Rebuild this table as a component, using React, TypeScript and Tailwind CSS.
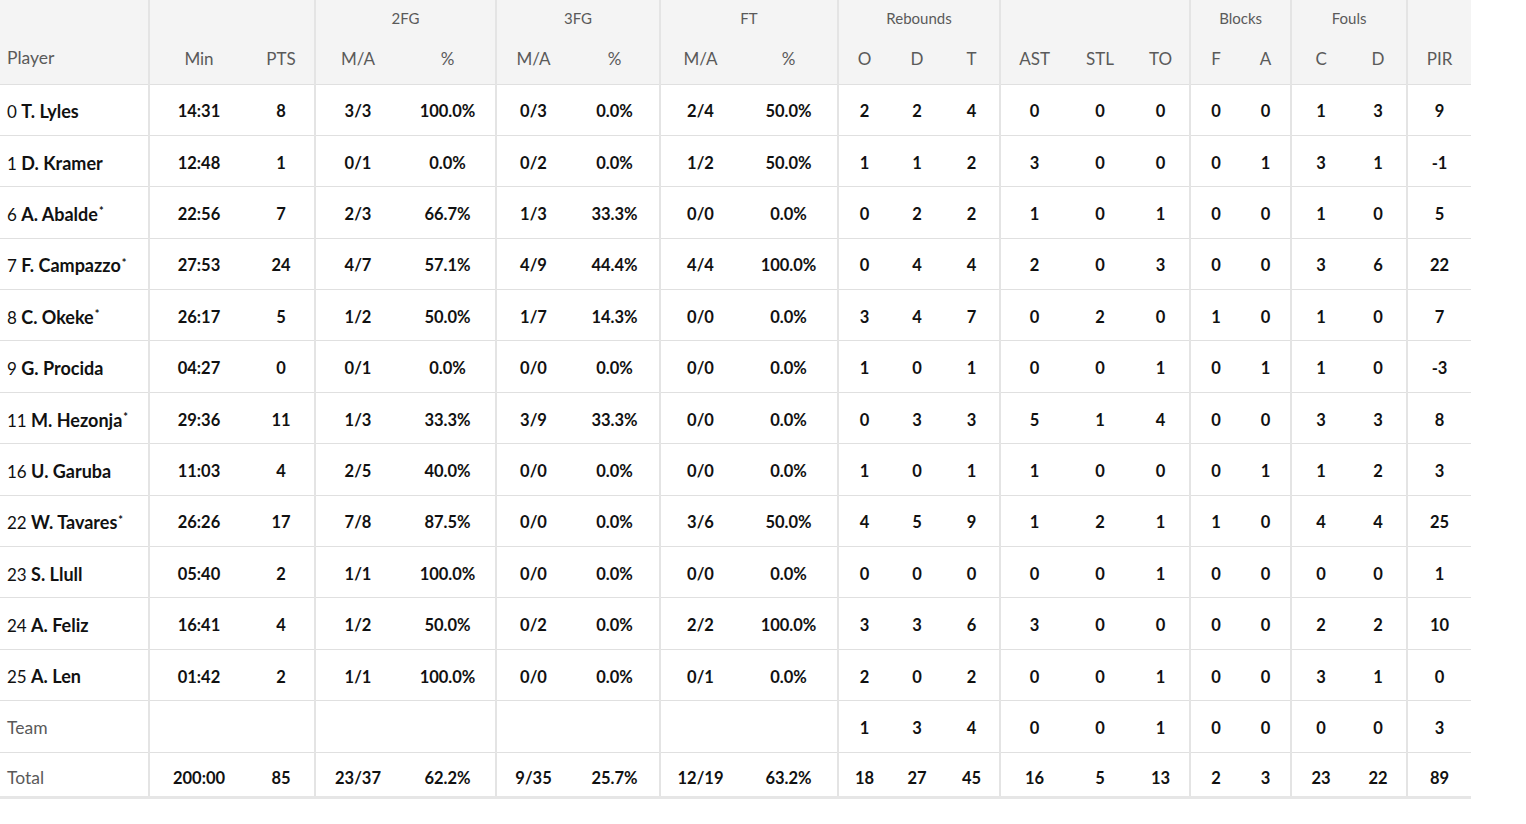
import React from "react";

type Row = {
  no?: string;
  name: string;
  starter?: boolean;
  stats: string[];
};

const rows: Row[] = [
  { no: "0", name: "T. Lyles", stats: ["14:31", "8", "3/3", "100.0%", "0/3", "0.0%", "2/4", "50.0%", "2", "2", "4", "0", "0", "0", "0", "0", "1", "3", "9"] },
  { no: "1", name: "D. Kramer", stats: ["12:48", "1", "0/1", "0.0%", "0/2", "0.0%", "1/2", "50.0%", "1", "1", "2", "3", "0", "0", "0", "1", "3", "1", "-1"] },
  { no: "6", name: "A. Abalde", starter: true, stats: ["22:56", "7", "2/3", "66.7%", "1/3", "33.3%", "0/0", "0.0%", "0", "2", "2", "1", "0", "1", "0", "0", "1", "0", "5"] },
  { no: "7", name: "F. Campazzo", starter: true, stats: ["27:53", "24", "4/7", "57.1%", "4/9", "44.4%", "4/4", "100.0%", "0", "4", "4", "2", "0", "3", "0", "0", "3", "6", "22"] },
  { no: "8", name: "C. Okeke", starter: true, stats: ["26:17", "5", "1/2", "50.0%", "1/7", "14.3%", "0/0", "0.0%", "3", "4", "7", "0", "2", "0", "1", "0", "1", "0", "7"] },
  { no: "9", name: "G. Procida", stats: ["04:27", "0", "0/1", "0.0%", "0/0", "0.0%", "0/0", "0.0%", "1", "0", "1", "0", "0", "1", "0", "1", "1", "0", "-3"] },
  { no: "11", name: "M. Hezonja", starter: true, stats: ["29:36", "11", "1/3", "33.3%", "3/9", "33.3%", "0/0", "0.0%", "0", "3", "3", "5", "1", "4", "0", "0", "3", "3", "8"] },
  { no: "16", name: "U. Garuba", stats: ["11:03", "4", "2/5", "40.0%", "0/0", "0.0%", "0/0", "0.0%", "1", "0", "1", "1", "0", "0", "0", "1", "1", "2", "3"] },
  { no: "22", name: "W. Tavares", starter: true, stats: ["26:26", "17", "7/8", "87.5%", "0/0", "0.0%", "3/6", "50.0%", "4", "5", "9", "1", "2", "1", "1", "0", "4", "4", "25"] },
  { no: "23", name: "S. Llull", stats: ["05:40", "2", "1/1", "100.0%", "0/0", "0.0%", "0/0", "0.0%", "0", "0", "0", "0", "0", "1", "0", "0", "0", "0", "1"] },
  { no: "24", name: "A. Feliz", stats: ["16:41", "4", "1/2", "50.0%", "0/2", "0.0%", "2/2", "100.0%", "3", "3", "6", "3", "0", "0", "0", "0", "2", "2", "10"] },
  { no: "25", name: "A. Len", stats: ["01:42", "2", "1/1", "100.0%", "0/0", "0.0%", "0/1", "0.0%", "2", "0", "2", "0", "0", "1", "0", "0", "3", "1", "0"] },
  { name: "Team", stats: ["", "", "", "", "", "", "", "", "1", "3", "4", "0", "0", "1", "0", "0", "0", "0", "3"] },
  { name: "Total", stats: ["200:00", "85", "23/37", "62.2%", "9/35", "25.7%", "12/19", "63.2%", "18", "27", "45", "16", "5", "13", "2", "3", "23", "22", "89"] },
];

// widths for the 20 columns (player + 19 stats)
const widths = [149, 99, 67, 85, 96, 74, 90, 80, 98, 52, 54, 56, 68, 64, 58, 51, 50, 59, 57, 64];
// columns that start a group get the divider on the left
const groupStart = new Set([1, 3, 5, 7, 9, 12, 15, 17, 19]);

const groups = [
  { label: "", span: 2 },
  { label: "2FG", span: 2 },
  { label: "3FG", span: 2 },
  { label: "FT", span: 2 },
  { label: "Rebounds", span: 3 },
  { label: "", span: 3 },
  { label: "Blocks", span: 2 },
  { label: "Fouls", span: 2 },
  { label: "", span: 1 },
];

const subHeads = ["Min", "PTS", "M/A", "%", "M/A", "%", "M/A", "%", "O", "D", "T", "AST", "STL", "TO", "F", "A", "C", "D", "PIR"];

const divider = "border-l-2 border-l-[#e4e4e4]";

const App = () => {
  return (
    <div className="w-[1526px] h-[824px] bg-white font-['Lato','Noto_Sans',sans-serif] text-[#111]">
      <table className="table-fixed border-collapse w-[1471px]">
        <colgroup>
          {widths.map((w, i) => (
            <col key={i} style={{ width: w }} />
          ))}
        </colgroup>
        <thead className="bg-[#f4f4f4] text-[#5a5a5a]">
          <tr className="h-[36px]">
            <th className="font-normal"></th>
            {groups.map((g, i) => (
              <th
                key={i}
                colSpan={g.span}
                className={`${divider} font-normal text-[15px] text-center align-middle pt-[1px]`}
              >
                {g.label}
              </th>
            ))}
          </tr>
          <tr className="h-[48px] border-b border-b-[#e0e0e0]">
            <th className="font-normal text-[17.5px] text-left pl-[7px] align-middle pb-[3px]">Player</th>
            {subHeads.map((h, i) => (
              <th
                key={i}
                className={`${groupStart.has(i + 1) ? divider : ""} font-normal text-[17px] text-center align-middle pb-[3px]`}
              >
                {h}
              </th>
            ))}
          </tr>
        </thead>
        <tbody>
          {rows.map((r, ri) => {
            const last = ri === rows.length - 1;
            const pad = last ? "pt-[9px]" : "pt-[4px]";
            return (
              <tr
                key={ri}
                className={
                  last
                    ? "h-[45px] border-b-[3px] border-b-[#e6e6e6]"
                    : "h-[51.4px] border-b border-b-[#e0e0e0]"
                }
              >
                <td className={`pl-[7px] whitespace-nowrap ${pad}`}>
                  {r.no ? (
                    <>
                      <span className="font-normal text-[17px]">{r.no} </span>
                      <span className="font-bold text-[18px]">{r.name}</span>
                      {r.starter && <sup className="font-bold text-[11px] ml-[1px]">*</sup>}
                    </>
                  ) : (
                    <span className="text-[#5a5a5a] text-[17.5px]">{r.name}</span>
                  )}
                </td>
                {r.stats.map((s, i) => (
                  <td
                    key={i}
                    className={`${groupStart.has(i + 1) ? divider : ""} ${pad} text-center font-bold text-[16.5px]`}
                  >
                    {s}
                  </td>
                ))}
              </tr>
            );
          })}
        </tbody>
      </table>
    </div>
  );
};

export default App;
